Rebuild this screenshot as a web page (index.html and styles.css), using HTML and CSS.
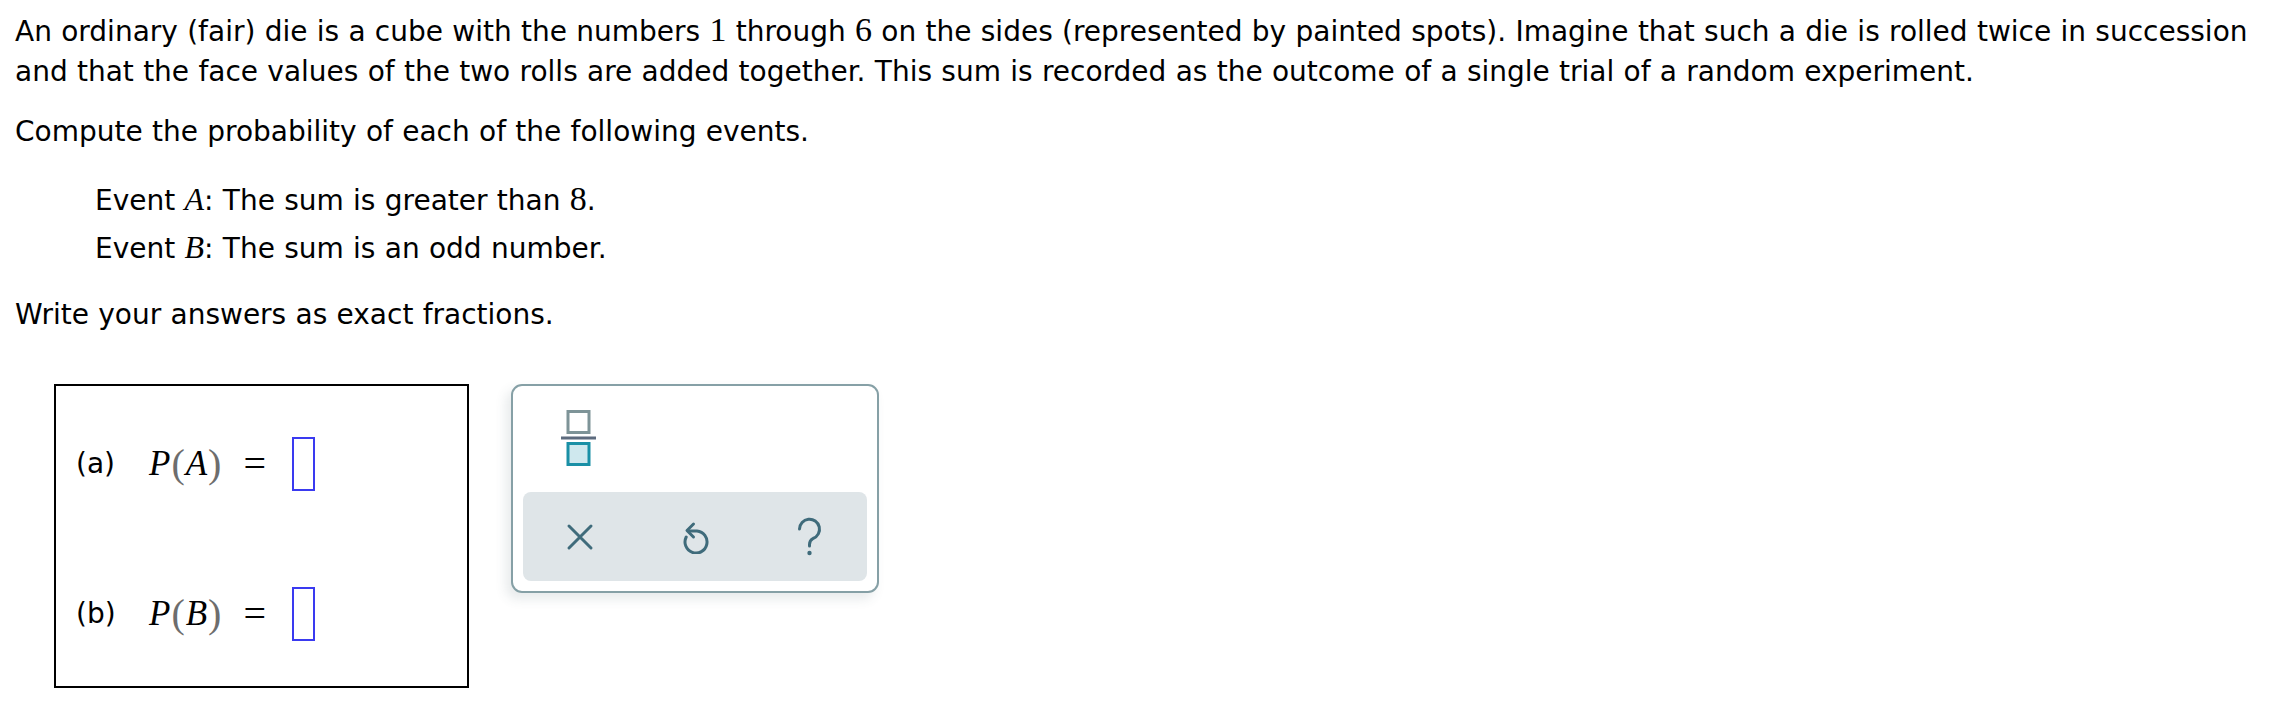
FILE: index.html
```html
<!DOCTYPE html>
<html>
<head>
<meta charset="utf-8">
<link rel="stylesheet" href="styles.css">
</head>
<body>
<div class="page">
  <p class="intro">An ordinary (fair) die is a cube with the numbers <span class="num">1</span> through <span class="num">6</span> on the sides (represented by painted spots). Imagine that such a die is rolled twice in succession<br>and that the face values of the two rolls are added together. This sum is recorded as the outcome of a single trial of a random experiment.</p>
  <p class="para">Compute the probability of each of the following events.</p>
  <div class="events">
    <div class="event">Event <span class="mi">A</span>: The sum is greater than <span class="num">8</span>.</div>
    <div class="event">Event <span class="mi">B</span>: The sum is an odd number.</div>
  </div>
  <p class="para write">Write your answers as exact fractions.</p>

  <div class="answer-row">
    <div class="answer-box">
      <div class="answer">
        <span class="label">(a)</span>
        <span class="expr"><span class="mp">P</span><span class="paren">(</span><span class="mv">A</span><span class="paren">)</span></span>
        <span class="eq">=</span>
        <span class="input"></span>
      </div>
      <div class="answer">
        <span class="label">(b)</span>
        <span class="expr"><span class="mp">P</span><span class="paren">(</span><span class="mv">B</span><span class="paren">)</span></span>
        <span class="eq">=</span>
        <span class="input"></span>
      </div>
    </div>

    <div class="keypad">
      <div class="keypad-top">
        <svg class="frac-icon" width="36" height="56" viewBox="0 0 36 56">
          <rect x="7" y="1.5" width="21" height="21" fill="#fff" stroke="#7e9498" stroke-width="3"/>
          <rect x="0" y="26.5" width="35" height="3" fill="#5d6b7e"/>
          <rect x="7" y="33.5" width="21" height="21" fill="#cfe8ee" stroke="#1a90a6" stroke-width="3"/>
        </svg>
      </div>
      <div class="keypad-bar">
        <svg class="kicon" width="30" height="30" viewBox="0 0 30 30">
          <path d="M4 4 L26 26 M26 4 L4 26" stroke="#3f6b7b" stroke-width="3" stroke-linecap="round" fill="none"/>
        </svg>
        <svg class="kicon" width="30" height="34" viewBox="0 0 30 34">
          <path d="M6.2 17 A11 11 0 1 0 17 11 L10 11" stroke="#3f6b7b" stroke-width="3" stroke-linecap="round" stroke-linejoin="round" fill="none"/>
          <path d="M13.5 4 L7 10.5 L13.5 17" stroke="#3f6b7b" stroke-width="3" stroke-linecap="round" stroke-linejoin="round" fill="none"/>
        </svg>
        <svg class="kicon" width="30" height="40" viewBox="0 0 30 40">
          <path d="M4.5 12 A10 10 0 1 1 18 21.5 Q14.5 23.5 14.5 27.5 L14.5 29" stroke="#3f6b7b" stroke-width="3" stroke-linecap="round" fill="none"/>
          <circle cx="14.5" cy="36" r="2.2" fill="#3f6b7b"/>
        </svg>
      </div>
    </div>
  </div>
</div>
</body>
</html>
```

FILE: styles.css
```css
html, body {
  margin: 0;
  padding: 0;
  background: #ffffff;
}

.page {
  padding: 12px 0 0 15px;
  font-family: "DejaVu Sans", Verdana, sans-serif;
  font-size: 28px;
  line-height: 40px;
  word-spacing: 0.4px;
  color: #000;
}

.intro {
  margin: 0;
  white-space: nowrap;
}

.num {
  font-family: "Liberation Serif", "Times New Roman", serif;
  font-size: 34px;
  line-height: 1;
}

.mi {
  font-family: "Liberation Serif", "Times New Roman", serif;
  font-style: italic;
  font-size: 32px;
  line-height: 1;
}

.para {
  margin: 20px 0 0 0;
}

.events {
  margin-top: 25px;
  padding-left: 80px;
}

.event {
  line-height: 48px;
}

.write {
  margin-top: 22px;
}

.answer-row {
  display: flex;
  align-items: flex-start;
  margin-top: 49px;
  margin-left: 39px;
}

.answer-box {
  box-sizing: border-box;
  width: 415px;
  height: 304px;
  border: 2px solid #000;
  display: flex;
  flex-direction: column;
  padding: 51px 0 0 20px;
  gap: 97px;
}

.answer {
  display: flex;
  align-items: center;
  height: 53px;
}

.label {
  font-size: 28px;
  width: 73px;
}

.expr {
  font-family: "Liberation Serif", "Times New Roman", serif;
  font-size: 35px;
  display: flex;
  align-items: center;
}

.mp, .mv {
  font-style: italic;
}

.paren {
  color: #6d6d6d;
  font-size: 40px;
  margin: 0 1px;
}

.eq {
  font-family: "Liberation Serif", "Times New Roman", serif;
  font-size: 40px;
  margin-left: 21px;
  width: 49px;
}

.input {
  box-sizing: border-box;
  width: 23px;
  height: 54px;
  border: 2px solid #3a3af0;
}

.keypad {
  box-sizing: border-box;
  width: 368px;
  height: 209px;
  margin-left: 42px;
  border: 2px solid #86a0a6;
  border-radius: 11px;
  box-shadow: -5px 6px 12px rgba(60, 80, 90, 0.12);
  background: #fff;
  display: flex;
  flex-direction: column;
  padding: 0 10px 10px 10px;
}

.keypad-top {
  height: 106px;
  display: flex;
  align-items: center;
  padding-left: 38px;
}

.frac-icon {
  display: block;
  margin-top: -2px;
}

.keypad-bar {
  flex: 1;
  background: #dfe5e8;
  border-radius: 8px;
  display: flex;
  align-items: center;
  padding-left: 42px;
  gap: 85px;
}

.kicon {
  display: block;
}
```
